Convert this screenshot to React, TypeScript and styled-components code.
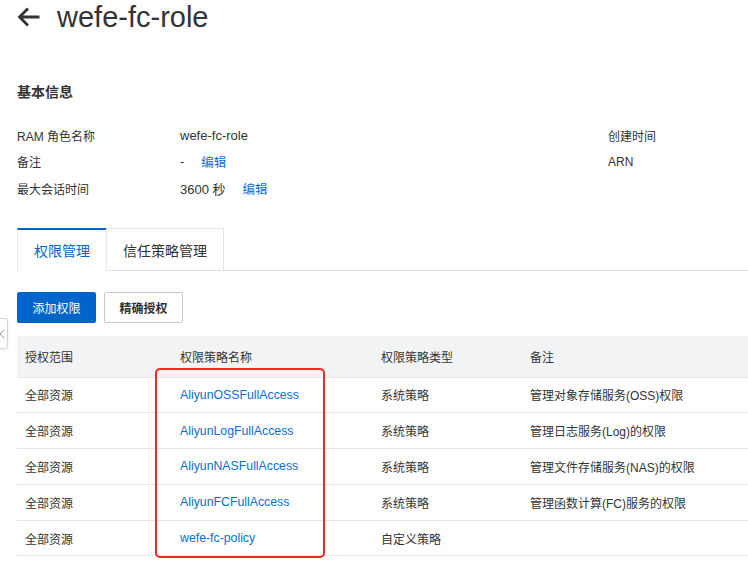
import React from "react";
import styled, { createGlobalStyle } from "styled-components";

const Global = createGlobalStyle`
  html, body { margin: 0; padding: 0; background: #fff; }
  body { font-family: "Liberation Sans", "Noto Sans CJK SC", sans-serif; color: #333; overflow: hidden; }
  * { box-sizing: border-box; }
`;

const Page = styled.div`
  position: relative;
  width: 748px;
  height: 574px;
  padding-left: 17px;
  overflow: hidden;
`;

const Header = styled.div`
  display: flex;
  align-items: center;
  gap: 16px;
  height: 34px;
`;

const Title = styled.h1`
  margin: 0;
  font-size: 29px;
  font-weight: 400;
  color: #333;
  line-height: 34px;
`;

const SectionTitle = styled.div`
  margin-top: 49px;
  font-size: 14px;
  font-weight: 700;
  line-height: 18px;
  color: #333;
`;

const InfoGrid = styled.div`
  margin-top: 21px;
  display: grid;
  grid-template-columns: 163px 428px 1fr;
  grid-auto-rows: 26.5px;
  align-items: center;
  font-size: 12px;
`;

const Label = styled.div`
  font-size: 12px;
  color: #333;
`;

const Value = styled.div`
  display: flex;
  align-items: center;
  font-size: 13px;
  color: #333;
`;

const EditLink = styled.a<{ $gap: number }>`
  margin-left: ${(p) => p.$gap}px;
  font-size: 12.5px;
  color: #0a6fd0;
  cursor: pointer;
`;

const TabBar = styled.div`
  margin-top: 26px;
  display: flex;
  height: 43px;
`;

const Tab = styled.div<{ $active?: boolean }>`
  display: flex;
  align-items: center;
  justify-content: center;
  padding: 0 16px;
  font-size: 14px;
  color: ${(p) => (p.$active ? "#0064c8" : "#333")};
  background: #fff;
  border-top: ${(p) => (p.$active ? "2px solid #0064c8" : "1px solid #e3e3e3")};
  border-left: 1px solid #e8e8e8;
  border-right: ${(p) => (p.$active ? "none" : "1px solid #e3e3e3")};
  border-bottom: ${(p) => (p.$active ? "none" : "1px solid #e3e3e3")};
  padding-top: ${(p) => (p.$active ? "0" : "1px")};
`;

const TabFill = styled.div`
  flex: 1;
  border-bottom: 1px solid #e3e3e3;
`;

const Toolbar = styled.div`
  margin-top: 21px;
  display: flex;
  gap: 8px;
`;

const Button = styled.button<{ $primary?: boolean }>`
  width: 79px;
  height: 31px;
  border-radius: 2px;
  font-family: inherit;
  font-size: 12px;
  font-weight: ${(p) => (p.$primary ? 400 : 700)};
  color: ${(p) => (p.$primary ? "#fff" : "#333")};
  background: ${(p) => (p.$primary ? "#0064c8" : "#fff")};
  border: 1px solid ${(p) => (p.$primary ? "#0064c8" : "#c9c9c9")};
  padding: 0;
`;

const Table = styled.div`
  margin-top: 13px;
  display: grid;
  grid-template-columns: 163px 201px 149px 1fr;
  font-size: 12px;
`;

const HeadCell = styled.div`
  height: 42px;
  display: flex;
  align-items: center;
  padding-left: 8px;
  background: #f2f3f5;
  color: #333;
  border-bottom: 1px solid #e6e6e6;
  &:not(:first-child) { padding-left: 0; }
`;

const Cell = styled.div<{ $first?: boolean }>`
  height: 35.8px;
  display: flex;
  align-items: center;
  padding-left: ${(p) => (p.$first ? "8px" : "0")};
  color: #333;
  border-bottom: 1px solid #e6e6e6;
`;

const PolicyLink = styled.a`
  font-size: 12.3px;
  color: #0a6fd0;
  cursor: pointer;
`;

const Highlight = styled.div`
  position: absolute;
  left: 155px;
  top: 368px;
  width: 170px;
  height: 190px;
  border: 2.5px solid #f5281e;
  border-radius: 5px;
  pointer-events: none;
`;

const SideHandle = styled.div`
  position: absolute;
  left: -12px;
  top: 318px;
  width: 20px;
  height: 31px;
  background: #fff;
  border: 1px solid #d6d6d6;
  border-radius: 3px;
  box-shadow: 0 1px 3px rgba(0,0,0,0.08);
  display: flex;
  align-items: center;
  justify-content: flex-end;
  padding-right: 2px;
`;

const BackArrow = () => (
  <svg width="24" height="20" viewBox="0 0 24 20" fill="none">
    <path d="M22.5 10H2.5M11 1.5L2.5 10L11 18.5" stroke="#333" strokeWidth="2.8" strokeLinecap="butt" strokeLinejoin="miter" />
  </svg>
);

const rows = [
  ["AliyunOSSFullAccess", "系统策略", "管理对象存储服务(OSS)权限"],
  ["AliyunLogFullAccess", "系统策略", "管理日志服务(Log)的权限"],
  ["AliyunNASFullAccess", "系统策略", "管理文件存储服务(NAS)的权限"],
  ["AliyunFCFullAccess", "系统策略", "管理函数计算(FC)服务的权限"],
  ["wefe-fc-policy", "自定义策略", ""],
];

export default function App() {
  return (
    <>
      <Global />
      <Page>
        <Header>
          <BackArrow />
          <Title>wefe-fc-role</Title>
        </Header>
        <SectionTitle>基本信息</SectionTitle>
        <InfoGrid>
          <Label>RAM 角色名称</Label>
          <Value>wefe-fc-role</Value>
          <Label>创建时间</Label>
          <Label>备注</Label>
          <Value>
            -<EditLink $gap={17}>编辑</EditLink>
          </Value>
          <Label>ARN</Label>
          <Label>最大会话时间</Label>
          <Value>
            3600 秒<EditLink $gap={17}>编辑</EditLink>
          </Value>
          <div />
        </InfoGrid>
        <TabBar>
          <Tab $active>权限管理</Tab>
          <Tab>信任策略管理</Tab>
          <TabFill />
        </TabBar>
        <Toolbar>
          <Button $primary>添加权限</Button>
          <Button>精确授权</Button>
        </Toolbar>
        <Table>
          <HeadCell>授权范围</HeadCell>
          <HeadCell>权限策略名称</HeadCell>
          <HeadCell>权限策略类型</HeadCell>
          <HeadCell>备注</HeadCell>
          {rows.map((r) => (
            <React.Fragment key={r[0]}>
              <Cell $first>全部资源</Cell>
              <Cell>
                <PolicyLink>{r[0]}</PolicyLink>
              </Cell>
              <Cell>{r[1]}</Cell>
              <Cell>{r[2]}</Cell>
            </React.Fragment>
          ))}
        </Table>
        <Highlight />
        <SideHandle>
          <svg width="6" height="10" viewBox="0 0 6 10" fill="none">
            <path d="M5 1L1 5L5 9" stroke="#999" strokeWidth="1" />
          </svg>
        </SideHandle>
      </Page>
    </>
  );
}
